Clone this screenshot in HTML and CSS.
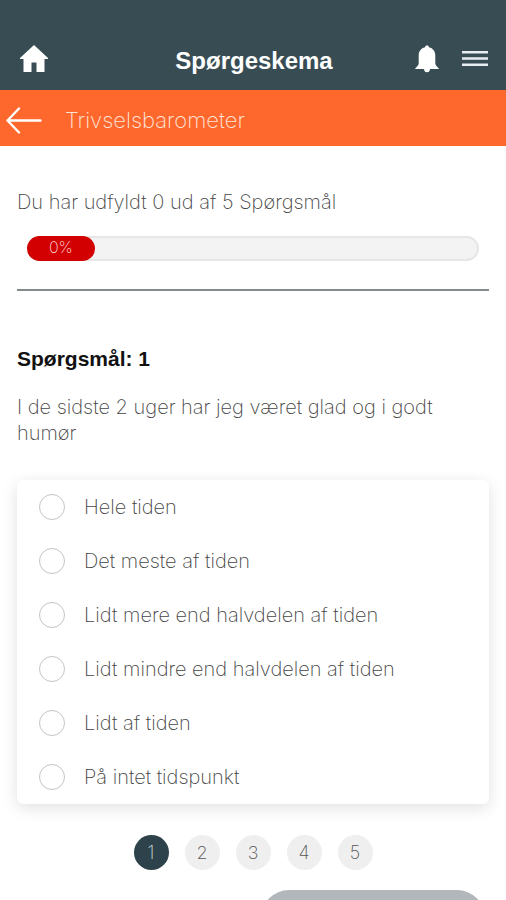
FILE: index.html
```html
<!DOCTYPE html>
<html lang="da">
<head>
<meta charset="utf-8">
<meta name="viewport" content="width=device-width, initial-scale=1">
<title>Spørgeskema</title>
<link rel="stylesheet" href="styles.css">
</head>
<body>
<header class="topbar">
  <a class="icon-link" href="#" aria-label="Hjem">
    <svg width="28" height="28" viewBox="0 0 28 28" fill="#fff"><path d="M14 0 L28 13 V14 H24.500 V27 H16.500 V17.500 H11.500 V27 H3.500 V14 H0 V13 Z"/></svg>
  </a>
  <h1 class="topbar-title">Spørgeskema</h1>
  <div class="topbar-actions">
    <button class="icon-button" type="button" aria-label="Notifikationer">
      <svg width="24" height="28" viewBox="0 0 24 28" fill="#fff"><path d="M12 0.500c1.200 0 1.800.7 2 1.700 4 1 6.300 4 6.300 8.300v7.500c0 2 1.500 3.500 3.400 5.200v.8H.3v-.8c1.900-1.700 3.400-3.200 3.400-5.200v-7.500C3.700 6.200 6 3.200 10 2.200c.2-1 .8-1.700 2-1.700z"/><path d="M9 24h6c0 2-1.300 3.300-3 3.300s-3-1.300-3-3.300z"/></svg>
    </button>
    <button class="icon-button" type="button" aria-label="Menu">
      <svg width="26" height="16" viewBox="0 0 26 16" fill="#e6eef2"><path d="M0 0h26v2.500H0zM0 6.300h26v2.500H0zM0 12.500h26v2.500H0z"/></svg>
    </button>
  </div>
</header>
<nav class="subbar">
  <a class="icon-link" href="#" aria-label="Tilbage">
    <svg width="36" height="28" viewBox="0 0 36 28" fill="none" stroke="#fff" stroke-width="2.400" stroke-linecap="round" stroke-linejoin="round"><path d="M34.500 14.500H1.500M13 2.500L1.500 14.500L13 26.500"/></svg>
  </a>
  <h2 class="subbar-title">Trivselsbarometer</h2>
</nav>
<main class="content">
  <section class="status">
    <p class="status-text">Du har udfyldt 0 ud af 5 Spørgsmål</p>
    <div class="progress" role="progressbar" aria-valuenow="0" aria-valuemin="0" aria-valuemax="100"><span class="progress-fill">0%</span></div>
  </section>
  <form class="question">
    <h3 class="question-title">Spørgsmål: 1</h3>
    <p class="question-text" id="question-text">I de sidste 2 uger har jeg været glad og i godt humør</p>
    <div class="options" role="radiogroup" aria-labelledby="question-text">
      <label class="option"><input type="radio" name="answer" value="1">Hele tiden</label>
      <label class="option"><input type="radio" name="answer" value="2">Det meste af tiden</label>
      <label class="option"><input type="radio" name="answer" value="3">Lidt mere end halvdelen af tiden</label>
      <label class="option"><input type="radio" name="answer" value="4">Lidt mindre end halvdelen af tiden</label>
      <label class="option"><input type="radio" name="answer" value="5">Lidt af tiden</label>
      <label class="option"><input type="radio" name="answer" value="6">På intet tidspunkt</label>
    </div>
    <div class="pager">
      <button class="page page-current" type="button" aria-current="step">1</button>
      <button class="page" type="button">2</button>
      <button class="page" type="button">3</button>
      <button class="page" type="button">4</button>
      <button class="page" type="button">5</button>
    </div>
    <button class="next" type="button" aria-label="Næste"></button>
  </form>
</main>
</body>
</html>
```
FILE: styles.css
```css
* {
  box-sizing: border-box;
}

body {
  margin: 0;
  height: 100vh;
  overflow: hidden;
  background: #fff;
  color: #444;
  font-family: Inter, "Liberation Sans", sans-serif;
  font-size: 20px;
  font-weight: 200;
  line-height: 26px;
}

h1, h2, h3, p {
  margin: 0;
}

button {
  border: 0;
  padding: 0;
  background: none;
  font: inherit;
  color: inherit;
}

svg {
  display: block;
}

.topbar {
  display: grid;
  grid-template-columns: 1fr auto 1fr;
  align-items: center;
  height: 90px;
  padding: 28px 18px 0 20px;
  background: #384c54;
}

.icon-link {
  justify-self: start;
}

.topbar-title {
  padding-top: 4px;
  color: #fff;
  font-family: "Liberation Sans", sans-serif;
  font-size: 24px;
  font-weight: 700;
}

.topbar-actions {
  display: flex;
  align-items: center;
  justify-self: end;
  gap: 23px;
}

.subbar {
  display: flex;
  align-items: center;
  gap: 23px;
  height: 56px;
  padding: 4px 6px 0;
  background: #ff682d;
}

.subbar-title {
  color: #ffe4d8;
  font-size: 22px;
  font-weight: 200;
}

.content {
  padding: 43px 17px 0;
}

.status {
  padding-bottom: 28px;
  border-bottom: 2px solid #858a8c;
}

.progress {
  height: 25px;
  margin: 21px 10px 0;
  border-radius: 13px;
  background: #f3f3f3;
  box-shadow: inset 0 0 0 2px #e6e6e6;
}

.progress-fill {
  display: block;
  width: 15%;
  height: 25px;
  border-radius: 13px;
  background: #d20000;
  color: #ffdada;
  font-size: 16px;
  line-height: 23px;
  text-align: center;
}

.question {
  display: flex;
  flex-direction: column;
  padding-top: 55px;
}

.question-title {
  color: #111;
  font-family: "Liberation Sans", sans-serif;
  font-size: 21px;
  font-weight: 700;
}

.question-text {
  margin-top: 22px;
}

.options {
  margin-top: 34px;
  border-radius: 6px;
  background: #fff;
  box-shadow: 0 4px 16px rgba(0, 0, 0, 0.12);
}

.option {
  display: flex;
  align-items: center;
  gap: 19px;
  height: 54px;
  padding-left: 22px;
}

.option input {
  appearance: none;
  width: 26px;
  height: 26px;
  margin: 0;
  border: 1px solid #c4c4c4;
  border-radius: 50%;
}

.option input:checked {
  border: 8px solid #384c54;
}

.pager {
  display: flex;
  justify-content: center;
  gap: 16px;
  margin-top: 31px;
}

.page {
  width: 35px;
  height: 35px;
  border-radius: 50%;
  background: #efefef;
  color: #555;
  font-size: 18px;
  font-weight: 200;
}

.page-current {
  background: #2d424b;
  color: #cfd6d9;
}

.next {
  align-self: flex-end;
  width: 224px;
  height: 56px;
  margin: 20px 4px 0 0;
  border-radius: 28px;
  background: #b1b7bb;
}
```
